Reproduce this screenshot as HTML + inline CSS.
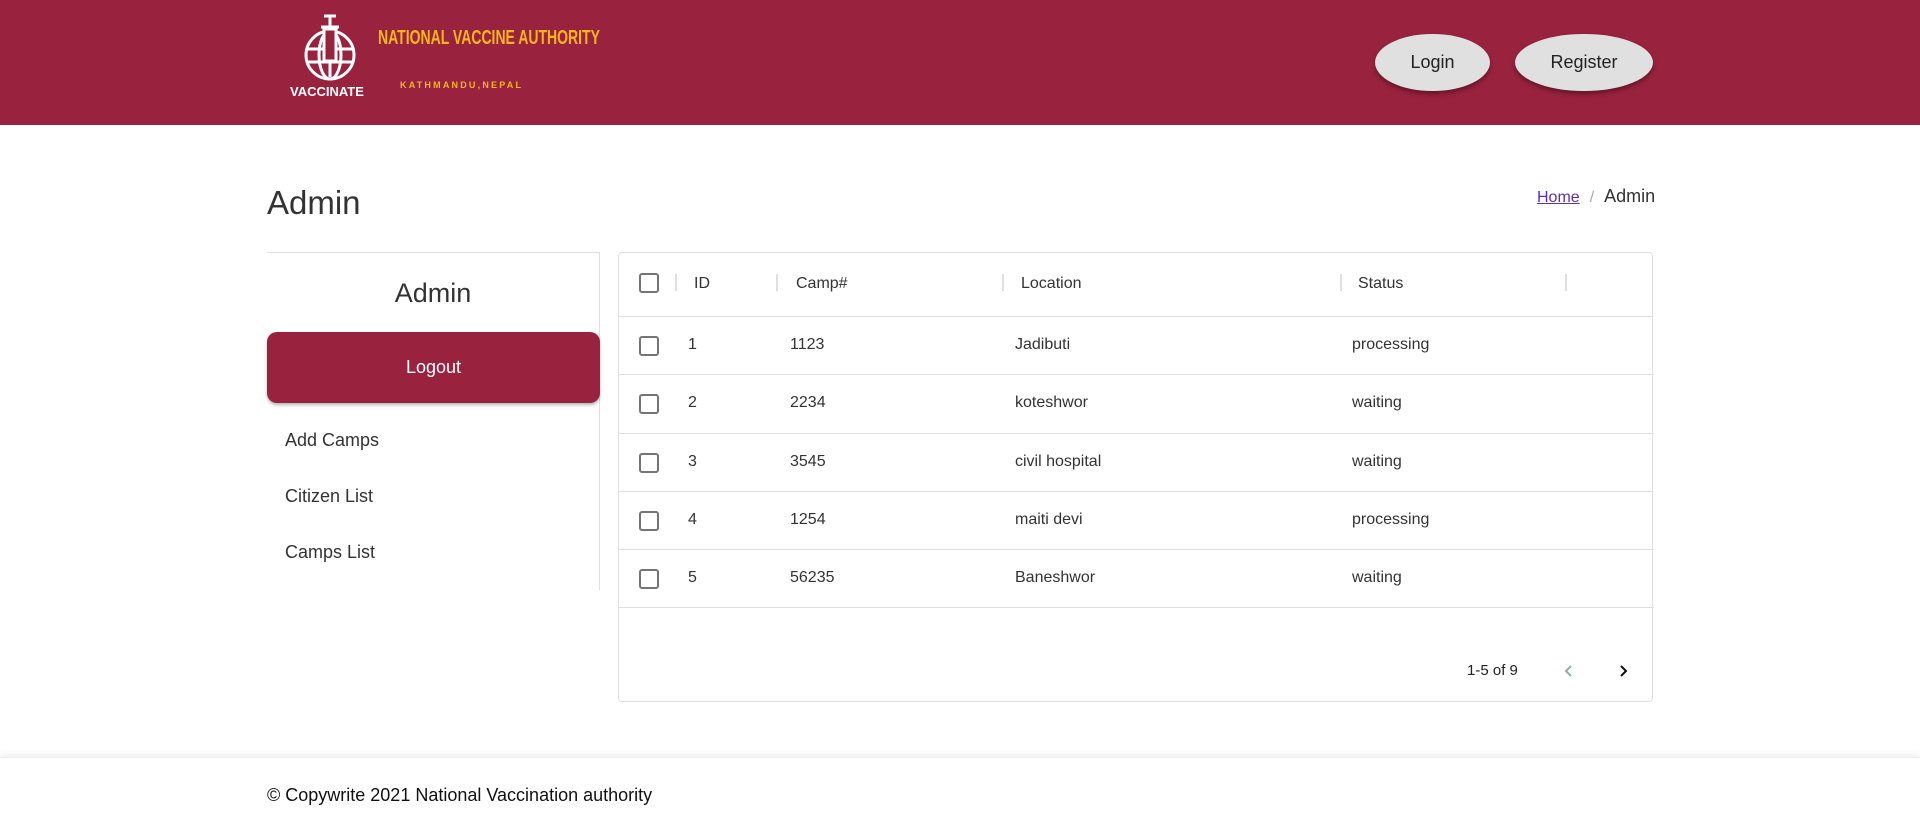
<!DOCTYPE html>
<html><head><meta charset="utf-8"><style>
*{box-sizing:border-box;margin:0;padding:0}
body{width:1920px;height:832px;overflow:hidden;background:#fff;font-family:"Liberation Sans",Arial,sans-serif;color:#333;position:relative}
.hdr{position:absolute;left:0;top:0;width:1920px;height:125px;background:#99223e}
.abs{position:absolute}
.btn{position:absolute;top:34px;height:57px;background:#e0e0e0;border-radius:50%/50%;box-shadow:0 3px 4px rgba(0,0,0,.35);font-size:18px;color:#222;display:flex;align-items:center;justify-content:center}
.row{position:absolute;left:0;width:1035px;height:58px;border-top:1px solid #e0e0e0;font-size:16px;color:#333}
.cb{position:absolute;left:20px;width:20px;height:20px;border:2px solid #757575;border-radius:3px}
.c{position:absolute}
.sep{position:absolute;top:21px;width:2px;height:17px;background:#e0e0e0}
</style></head><body>
<div class="hdr">
<svg class="abs" style="left:297px;top:13px" width="66" height="70" viewBox="0 0 66 70" fill="none" stroke="#fff" stroke-width="3">
<circle cx="33" cy="42" r="24"/>
<ellipse cx="33" cy="42" rx="11" ry="24"/>
<line x1="9" y1="36" x2="57" y2="36"/><line x1="9" y1="49" x2="57" y2="49"/>
<rect x="27" y="16" width="12" height="32" fill="#99223e"/>
<line x1="24" y1="14" x2="42" y2="14"/><line x1="33" y1="4" x2="33" y2="14"/><line x1="27" y1="3" x2="39" y2="3"/>
<line x1="33" y1="48" x2="33" y2="64"/>
</svg>
<div class="abs" style="left:290px;top:84px;font-size:13px;font-weight:bold;color:#fff">VACCINATE</div>
<div class="abs" style="left:378px;top:27px;font-size:20px;font-weight:bold;color:#f7b51c;transform:scaleX(.7);transform-origin:left;white-space:nowrap">NATIONAL VACCINE AUTHORITY</div>
<div class="abs" style="left:400px;top:80px;font-size:9px;font-weight:bold;color:#f7b51c;letter-spacing:2.2px">KATHMANDU,NEPAL</div>
<div class="btn" style="left:1375px;width:115px">Login</div>
<div class="btn" style="left:1515px;width:138px">Register</div>
</div>
<div class="abs" style="left:267px;top:184px;font-size:33px;color:#333">Admin</div>
<div class="abs" style="left:1537px;top:186px;font-size:16px"><span style="color:#5b2fb6;text-decoration:underline">Home</span><span style="color:#aaa;margin:0 10px">/</span><span style="font-size:18px;color:#333">Admin</span></div>
<div class="abs" style="left:267px;top:252px;width:333px;height:338px;border-top:1px solid #e0e0e0;border-right:1px solid #e0e0e0">
<div style="text-align:center;margin-top:25px;font-size:27px;color:#333">Admin</div>
<div class="abs" style="left:0;top:79px;width:333px;height:71px;background:#99223e;border-radius:10px;color:#fff;font-size:18px;display:flex;align-items:center;justify-content:center;box-shadow:0 2px 3px rgba(0,0,0,.3)">Logout</div>
<div class="abs" style="left:18px;top:177px;font-size:18px">Add Camps</div>
<div class="abs" style="left:18px;top:233px;font-size:18px">Citizen List</div>
<div class="abs" style="left:18px;top:289px;font-size:18px">Camps List</div>
</div>
<div class="abs" style="left:618px;top:252px;width:1035px;height:450px;border:1px solid #e0e0e0;border-radius:4px">
<div style="position:absolute;left:0;top:0;height:63px;width:1035px;font-size:16px;color:#333">
<div class="cb" style="top:20px"></div>
<div class="sep" style="left:56px"></div><div class="c" style="left:75px;top:22px">ID</div>
<div class="sep" style="left:157px"></div><div class="c" style="left:177px;top:22px">Camp#</div>
<div class="sep" style="left:383px"></div><div class="c" style="left:402px;top:22px">Location</div>
<div class="sep" style="left:721px"></div><div class="c" style="left:739px;top:22px">Status</div>
<div class="sep" style="left:946px"></div>
</div>
<div class="row" style="top:63px"><div class="cb" style="top:19px"></div><div class="c" style="left:69px;top:19px">1</div><div class="c" style="left:171px;top:19px">1123</div><div class="c" style="left:396px;top:19px">Jadibuti</div><div class="c" style="left:733px;top:19px">processing</div></div>
<div class="row" style="top:121px"><div class="cb" style="top:19px"></div><div class="c" style="left:69px;top:19px">2</div><div class="c" style="left:171px;top:19px">2234</div><div class="c" style="left:396px;top:19px">koteshwor</div><div class="c" style="left:733px;top:19px">waiting</div></div>
<div class="row" style="top:180px"><div class="cb" style="top:19px"></div><div class="c" style="left:69px;top:19px">3</div><div class="c" style="left:171px;top:19px">3545</div><div class="c" style="left:396px;top:19px">civil hospital</div><div class="c" style="left:733px;top:19px">waiting</div></div>
<div class="row" style="top:238px"><div class="cb" style="top:19px"></div><div class="c" style="left:69px;top:19px">4</div><div class="c" style="left:171px;top:19px">1254</div><div class="c" style="left:396px;top:19px">maiti devi</div><div class="c" style="left:733px;top:19px">processing</div></div>
<div class="row" style="top:296px;height:59px;border-bottom:1px solid #e0e0e0"><div class="cb" style="top:19px"></div><div class="c" style="left:69px;top:19px">5</div><div class="c" style="left:171px;top:19px">56235</div><div class="c" style="left:396px;top:19px">Baneshwor</div><div class="c" style="left:733px;top:19px">waiting</div></div>
<div class="c" style="left:848px;top:409px;font-size:15px;color:#222">1-5 of 9</div>
<svg class="c" style="left:942px;top:410px" width="16" height="16" viewBox="0 0 16 16"><path d="M10 3L5 8l5 5" fill="none" stroke="#9aa" stroke-width="2"/></svg>
<svg class="c" style="left:996px;top:410px" width="16" height="16" viewBox="0 0 16 16"><path d="M6 3l5 5-5 5" fill="none" stroke="#111" stroke-width="2"/></svg>
</div>
<div class="abs" style="left:0;top:757px;width:1920px;height:75px;box-shadow:0 -3px 5px rgba(0,0,0,.06);border-top:1px solid #f0f0f0"></div>
<div class="abs" style="left:267px;top:785px;font-size:18px;color:#111">© Copywrite 2021 National Vaccination authority</div>
</body></html>
